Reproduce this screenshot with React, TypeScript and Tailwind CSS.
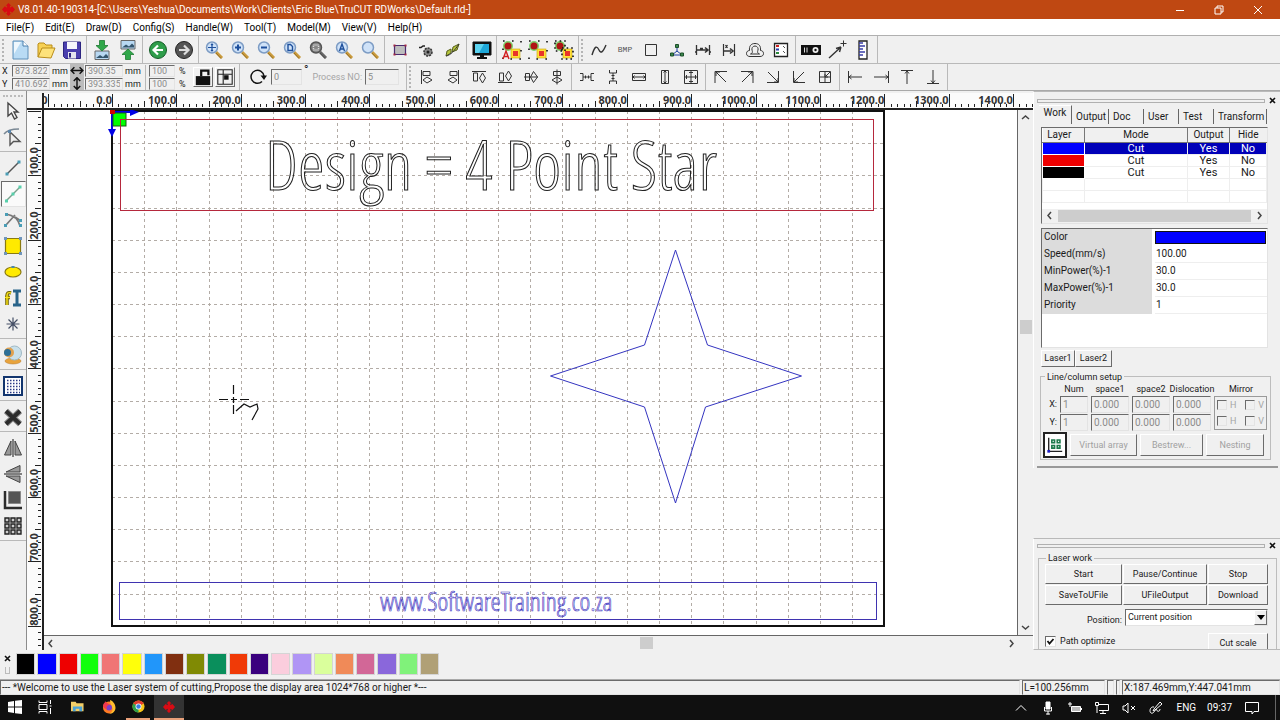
import React from 'react';

const SCALE = 0.6435;
const ORIGIN_X = 68;
const ORIGIN_Y = 1;
const BED_W = 772;
const BED_H = 515;

const raised = 'border border-t-white border-l-white border-r-[#6b6b6b] border-b-[#6b6b6b] bg-[#f0f0f0]';
const sunken = 'border border-t-[#6b6b6b] border-l-[#6b6b6b] border-r-[#e3e3e3] border-b-[#e3e3e3]';

const range = (from: number, to: number) =>
  Array.from({ length: to - from + 1 }, (_, i) => from + i);

/* ---------- icons ---------- */

const Icon: React.FC<{ children: React.ReactNode; className?: string }> = ({ children, className }) => (
  <svg viewBox="0 0 20 20" fill="none" stroke="#333" aria-hidden="true" className={className ?? 'w-5 h-5'}>
    {children}
  </svg>
);

const Magnifier: React.FC<{ children?: React.ReactNode; gray?: boolean }> = ({ children, gray }) => (
  <Icon>
    <path d="M12 12 L18 18" stroke={gray ? '#666' : '#c99a3c'} strokeWidth="3" />
    <path d="M12 13 L17 18.500" stroke={gray ? '#444' : '#8a6420'} strokeWidth="0.8" />
    <circle cx="8" cy="7.500" r="5.500" fill={gray ? '#888' : '#cfe2f8'} stroke={gray ? '#555' : '#7d9cc4'} strokeWidth="1.500" />
    <g stroke={gray ? '#ddd' : '#1d4f9c'} strokeWidth="1.400">{children}</g>
  </Icon>
);

const GroupIcon: React.FC<{ variant: 'auto' | 'group' | 'ungroup' }> = ({ variant }) => (
  <Icon>
    <circle cx="6" cy="6" r="5" fill="#7bd06a" stroke="none" />
    <circle cx="6" cy="6" r="3.500" fill="#b01414" stroke="none" />
    <rect x="9" y="9" width="9" height="9" fill="#ffe03a" stroke="#c9a600" strokeWidth="0.6" />
    <rect x="11" y="11" width="5" height="5" fill="#e8342a" stroke="none" />
    {variant === 'ungroup' ? (
      <path d="M1 1h10v10H1z M8 8h11v11H8z" stroke="#111" strokeWidth="1.600" strokeDasharray="1.600 3" />
    ) : (
      <path d="M1 1h18v18H1z" stroke="#111" strokeWidth="1.600" strokeDasharray="1.600 7.400" />
    )}
    {variant === 'auto' && <path d="M1 19 L4 11 L7 19 M2 16.500h4" stroke="#d21f1f" strokeWidth="1.400" />}
  </Icon>
);

type Tool = { label: string; icon: React.ReactNode };

const fileTools: Tool[][] = [
  [
    {
      label: 'New',
      icon: (
        <Icon>
          <path d="M3 1h10l5 5v13H3z" fill="#b9dbf4" stroke="#5f8fb8" />
          <path d="M4 2h7L4 14z" fill="#eef7fd" stroke="none" />
          <path d="M13 1v5h5" fill="#fff" stroke="#4a7fab" />
        </Icon>
      ),
    },
    {
      label: 'Open',
      icon: (
        <Icon>
          <path d="M2 17V4l1-1h5l2 2h6v3" fill="#f7d154" stroke="#b98d1b" />
          <path d="M2 17l4-9h13l-4 10z" fill="#fde27a" stroke="#b98d1b" />
        </Icon>
      ),
    },
    {
      label: 'Save',
      icon: (
        <Icon>
          <path d="M1.500 2h17v16.500h-15l-2-2z" fill="#4a3fae" stroke="#2c2480" />
          <path d="M5 2h10v7H5z" fill="#f5f5fb" stroke="none" />
          <path d="M6 12h8v6.500H6z" fill="#e4e4ee" stroke="none" />
          <path d="M8 13v4.500" stroke="#2c2480" strokeWidth="2" />
        </Icon>
      ),
    },
  ],
  [
    {
      label: 'Import',
      icon: (
        <Icon>
          <path d="M3 11h14v8.500H3z" fill="#b8d8f2" stroke="#666" />
          <path d="M4 18l4-3 3 2 3-3 2 2v2z" fill="#35566e" stroke="none" />
          <path d="M7.500 0.500h5v5h3.500L10 11 4 5.500h3.500z" fill="#2fa84a" stroke="#1d7a31" strokeWidth="0.8" />
        </Icon>
      ),
    },
    {
      label: 'Export',
      icon: (
        <Icon>
          <path d="M3 0.500h14V9H3z" fill="#b8d8f2" stroke="#666" />
          <path d="M4 7.500l4-3 3 2 3-3 2 2v2z" fill="#35566e" stroke="none" />
          <path d="M7.500 19.500h5v-5h3.500L10 9l-6 5.500h3.500z" fill="#2fa84a" stroke="#1d7a31" strokeWidth="0.8" />
        </Icon>
      ),
    },
  ],
  [
    {
      label: 'Undo',
      icon: (
        <Icon>
          <circle cx="10" cy="10" r="8.500" fill="#2f9e4b" stroke="#145c27" />
          <path d="M15 10H6M10 5.500L5.500 10l4.500 4.500" stroke="#fff" strokeWidth="2.200" />
        </Icon>
      ),
    },
    {
      label: 'Redo',
      icon: (
        <Icon>
          <circle cx="10" cy="10" r="8.500" fill="#555" stroke="#222" />
          <path d="M5 10h9M10 5.500l4.500 4.500-4.500 4.500" stroke="#ddd" strokeWidth="2.200" />
        </Icon>
      ),
    },
  ],
  [
    { label: 'Move view', icon: <Magnifier><path d="M8 3.500v8M4 7.500h8M7 5l1-1 1 1M7 10l1 1 1-1" strokeWidth="1.200" /></Magnifier> },
    { label: 'Zoom in', icon: <Magnifier><path d="M8 4.500v6M5 7.500h6" strokeWidth="2" /></Magnifier> },
    { label: 'Zoom out', icon: <Magnifier><path d="M5 7.500h6" strokeWidth="2" /></Magnifier> },
    { label: 'View page', icon: <Magnifier><path d="M6 4.500h2.500l2 2v4H6z" /></Magnifier> },
    { label: 'View selected', icon: <Magnifier gray><path d="M5.500 5h5v5h-5z" strokeDasharray="1 1" /></Magnifier> },
    { label: 'View all', icon: <Magnifier><path d="M5.500 11L8 4l2.500 7M6.500 9h3" /></Magnifier> },
    { label: 'View window', icon: <Magnifier /> },
  ],
  [
    {
      label: 'Show frame',
      icon: (
        <Icon>
          <path d="M4.500 5.500h11v9h-11z" fill="#bdbdbd" stroke="#4a2a70" strokeWidth="1.200" />
          <path d="M3.500 4.500h2v2h-2zM14.500 4.500h2v2h-2zM3.500 13.500h2v2h-2zM14.500 13.500h2v2h-2z" fill="#a32a42" stroke="none" />
        </Icon>
      ),
    },
    {
      label: 'Path settings',
      icon: (
        <Icon>
          <circle cx="12" cy="12" r="4" fill="#888" stroke="#333" strokeWidth="1.500" strokeDasharray="2 1" />
          <circle cx="12" cy="12" r="1.500" fill="#222" stroke="none" />
          <path d="M3 7.500h2l2-1.500h2" stroke="#222" strokeWidth="1.500" />
        </Icon>
      ),
    },
    {
      label: 'Curve smooth',
      icon: (
        <Icon>
          <path d="M4 16l1-5 4-2v4zM10 12l1-5 6-3-2 6z" fill="#b6c63c" stroke="#59611d" />
          <path d="M4 16c5-1 8-5 13-12" stroke="#333" />
        </Icon>
      ),
    },
  ],
  [
    {
      label: 'Preview',
      icon: (
        <Icon>
          <path d="M1 2h18v13H1z" fill="#111" stroke="#111" />
          <path d="M3 4h14v9H3z" fill="#1ea7d8" stroke="none" />
          <path d="M3 4h9l-5 9H3z" fill="#5cd3f0" stroke="none" />
          <path d="M8 15h4v2h3v2H5v-2h3z" fill="#111" stroke="none" />
        </Icon>
      ),
    },
  ],
  [
    { label: 'Auto group', icon: <GroupIcon variant="auto" /> },
    { label: 'Group', icon: <GroupIcon variant="group" /> },
    { label: 'Ungroup', icon: <GroupIcon variant="ungroup" /> },
  ],
];

const editTools: Tool[][] = [
  [
    { label: 'Smooth curve', icon: <Icon><path d="M3 15c3-10 5-9 7-5s4 2 7-5" strokeWidth="1.400" /></Icon> },
    { label: 'BMP handle', icon: <span className="font-['Liberation_Mono',monospace] text-[8px] text-[#555]">BMP</span> },
    { label: 'Cut optimize', icon: <Icon><path d="M4.500 4.500h11v11h-11z" /></Icon> },
    {
      label: 'Node edit',
      icon: (
        <Icon>
          <path d="M10 7v4l-5 4h10l-5-4" stroke="#1c3f9e" />
          <path d="M8.500 4.500h3v3h-3zM3.500 13h3v3h-3zM13.500 13h3v3h-3z" fill="#3d8a4f" stroke="#1c4f2a" />
        </Icon>
      ),
    },
    { label: 'Combine curve', icon: <Icon><path d="M3.500 5v10M16.500 5v10M2 12h2M16 12h2" strokeWidth="1.300" /><path d="M4 10h10M7 8.500h3M12 7.500l3 2.500-3 2.500" strokeWidth="1.600" /></Icon> },
    { label: 'Set gap', icon: <Icon><path d="M4.500 4v12M15.500 4v12M6.500 5l2 3M8.500 5l-2 3" strokeWidth="1.200" /><path d="M5 11h7M11 8.500l3 2.500-3 2.500" strokeWidth="1.600" /></Icon> },
    { label: 'Offset', icon: <Icon><path d="M5 16.500c-2 0-3.500-1-3.500-3s1.500-3 3-3C4 6 6 3.500 10 3.500s6 2.500 5.500 7c1.500 0 3 1 3 3s-1.500 3-3.500 3z" /><path d="M5.500 14c2.500-1 2-2.500 1.500-4S7.500 6 10 6s3.500 2.500 3 4-1 3 1.500 4z" /></Icon> },
    {
      label: 'Data check',
      icon: (
        <Icon>
          <path d="M3.500 3.500h13v13h-13z" fill="#fff" stroke="#222" strokeWidth="1.300" />
          <path d="M5 6h3" stroke="#c22" strokeWidth="2" />
          <path d="M5 9.500h3" stroke="#2a3fae" strokeWidth="2" />
          <path d="M5 13h3" stroke="#2c8a3c" strokeWidth="2" />
          <path d="M12 6l2 2M12 11l2 2" stroke="#555" />
        </Icon>
      ),
    },
  ],
  [
    {
      label: 'Device',
      icon: (
        <Icon>
          <path d="M0 5h20v10H0z" fill="#111" stroke="none" />
          <circle cx="14.500" cy="10" r="3" fill="#eee" stroke="none" />
          <circle cx="14.500" cy="10" r="1.200" fill="#111" stroke="none" />
          <path d="M3.500 7.500v5M6 7.500v5" stroke="#ddd" />
        </Icon>
      ),
    },
    { label: 'Laser point', icon: <Icon><path d="M2 18L14 7M14 7l-5 1.500M14 7l-1.500 5" strokeWidth="1.400" /><path d="M16.500 0.500v6M13.500 3.500h6" /></Icon> },
    { label: 'Measure', icon: <Icon><path d="M6 1h8v18H6z" fill="#fff" stroke="#222" strokeWidth="1.300" /><path d="M6 3h4M6 6h6M6 9h4M6 12h6M6 15h4" stroke="#3a3fa8" strokeWidth="1.300" /></Icon> },
  ],
];

const line = (label: string, d: string): Tool => ({ label, icon: <Icon><path d={d} /></Icon> });

const alignTools: Tool[][] = [
  [
    line('Align left', 'M4.500 3v14M6 4.500h7v4H6zM6 13l4-3 5 3-5 3z'),
    line('Align right', 'M15.500 3v14M7 4.500h7v4H7zM5 13l5-3 4 3-4 3z'),
    line('Align top', 'M3 4.500h14M4.500 6h4v8h-4zM13.500 6l3 5-3 5-3-5z'),
    line('Align bottom', 'M3 15.500h14M4.500 6h4v8h-4zM13.500 4l3 5-3 5-3-5z'),
    line('Align middle', 'M3 10h14M4.500 6.500h4v7h-4zM12.500 4.500l4 5.500-4 5.500-3-5.500z'),
    line('Align center', 'M10 2.500v15M6.500 4.500h7v4h-7zM10 10l5 3-5 3-5-3z'),
  ],
  [
    line('Equal horizontal space', 'M3 6.500h3v7H3M17 6.500h-3v7h3M6 10h8M8.500 8.500v3M11.500 8.500v3'),
    line('Equal vertical space', 'M6.500 3v3h7V3M6.500 17v-3h7v3M10 6v8M8.500 8.500h3M8.500 11.500h3'),
    line('Same width', 'M3.500 6.500h13v7h-13zM3.500 10h13M5.500 8.500L4 10l1.500 1.500M14.500 8.500L16 10l-1.500 1.500'),
    line('Same height', 'M6.500 3.500h7v13h-7zM10 3.500v13M8.500 5.500L10 4l1.500 1.500M8.500 14.500L10 16l1.500-1.500'),
    line('Same size', 'M3.500 3.500h13v13h-13zM10 3.500v13M3.500 10h13M8 5.500h4M8 14.500h4M5.500 8v4M14.500 8v4'),
  ],
  [
    line('To top left', 'M4 16V4.500h12M5 5l10 10M5 9V5h4'),
    line('To top right', 'M4 4.500h12V16M15 5L5 15M11 5h4v4'),
    line('To bottom right', 'M15.500 4v11.500H4M5 5l10 10M11 15h4v-4'),
    line('To bottom left', 'M4.500 4v11.500H16M15 5L5 15M5 11v4h4'),
    line('To center', 'M4.500 4.500h11v11h-11zM10 4v12M4 10h12M15 5l-5 5M10 7v3h3'),
  ],
  [
    line('To left', 'M3.500 4v12M4 10h13M6.500 8L4 10l2.500 2'),
    line('To right', 'M17.500 4v12M3 10h14M14.500 8l2.500 2-2.500 2'),
    line('To top', 'M4 3.500h12M10 4v13M8 6.500L10 4l2 2.500'),
    line('To bottom', 'M4 16.500h12M10 3v13M8 13.500l2 2.500 2-2.500'),
  ],
];

const drawTools: Tool[][] = [
  [
    { label: 'Pick', icon: <Icon><path d="M5 2v13l3.500-3 3 6 2.500-1.500-3-5.500H15z" fill="#f4f4f4" stroke="#444" strokeWidth="1.400" /></Icon> },
    { label: 'Edit node', icon: <Icon><path d="M7 5v13l3.500-3.500H17z" fill="#eee" stroke="#555" strokeWidth="1.400" /><path d="M1 7c3-4 8-5 15-5" stroke="#7a8894" strokeWidth="1.400" /><path d="M5 3h3v3H5z" fill="#5b86ac" stroke="none" /></Icon> },
  ],
  [
    { label: 'Line', icon: <Icon><path d="M4 16L16 4" stroke="#555" strokeWidth="1.500" /><path d="M2.500 14.500h3v3h-3zM14.500 2.500h3v3h-3z" fill="#4a9db5" stroke="none" /></Icon> },
    { label: 'Multi line', icon: <Icon><path d="M3 17L17 3" stroke="#7aa08c" strokeWidth="1.500" /><path d="M2 15.500h3v3H2zM8.500 8.500h3v3h-3zM15.500 1.500h3v3h-3z" fill="#58d0ac" stroke="none" /></Icon> },
    { label: 'Curve', icon: <Icon><path d="M3 4c6 1 12 4 14 12M3 15L12 5M12 7l6 4" stroke="#777" strokeWidth="1.700" /><path d="M2 3h3v3H2zM1 14h3v3H1zM16 14h3v3h-3zM16 9h3v3h-3z" fill="#4a9db5" stroke="none" /></Icon> },
    { label: 'Rectangle', icon: <Icon><path d="M2.500 2.500h15v15h-15z" fill="#ffea00" stroke="#8a7a10" strokeWidth="1.200" /><path d="M1 1h3v3H1zM16 1h3v3h-3zM1 16h3v3H1zM16 16h3v3h-3z" fill="#6f95bb" stroke="none" /></Icon> },
    { label: 'Ellipse', icon: <Icon><ellipse cx="10" cy="10" rx="8" ry="5" fill="#ffea00" stroke="#8a7a10" strokeWidth="1.200" /><path d="M8.500 4h3v2h-3z" fill="#4a86ac" stroke="none" /></Icon> },
    { label: 'Text', icon: <Icon><path d="M8 5c-3-1-4 0-4 3v9M2 9.500h5" stroke="#6b5e00" strokeWidth="3.500" /><path d="M8 5c-3-1-4 0-4 3v9M2 9.500h5" stroke="#f7e11b" strokeWidth="1.500" /><path d="M10 3h8M10 17h8M14 3v14" stroke="#29648a" strokeWidth="3" /></Icon> },
    { label: 'Point', icon: <Icon><path d="M10 3.500v13M3.500 10h13M5.500 5.500l9 9M14.500 5.500l-9 9" stroke="#444f66" strokeWidth="1.200" /></Icon> },
  ],
  [
    {
      label: 'Camera',
      icon: (
        <Icon>
          <ellipse cx="10" cy="16" rx="8" ry="3" fill="#e8a33c" stroke="#b5772a" strokeWidth="0.5" />
          <circle cx="11.500" cy="8" r="7" fill="#c9e0ea" stroke="#9fb9c6" />
          <circle cx="6" cy="7.500" r="5" fill="#e0a150" stroke="none" />
          <circle cx="4.500" cy="7.500" r="3.500" fill="#2d6f97" stroke="none" />
        </Icon>
      ),
    },
  ],
  [
    {
      label: 'Grid settings',
      icon: (
        <Icon>
          <path d="M1 1h18v18H1z" fill="#fff" stroke="#12356e" strokeWidth="2" />
          <path d="M4 4.500h13M4 7.500h13M4 10.500h13M4 13.500h13M4 16.500h13" stroke="#2a3a86" strokeWidth="1.500" strokeDasharray="1.500 1.500" />
        </Icon>
      ),
    },
  ],
  [{ label: 'Delete', icon: <Icon><path d="M3 4l14 13M17 4L3 17" stroke="#8a8a8a" strokeWidth="6" /><path d="M3 4l14 13M17 4L3 17" stroke="#2c2c2c" strokeWidth="4" /></Icon> }],
  [
    { label: 'Mirror horizontal', icon: <Icon><path d="M8 3v14H1.500zM12 3v14h6.500z" fill="#999" stroke="#444" /><path d="M10 1v18" stroke="#111" /></Icon> },
    { label: 'Mirror vertical', icon: <Icon><path d="M17 8H3l14-6.500zM17 12H3l14 6.500z" fill="#999" stroke="#444" /><path d="M1 10h18" stroke="#111" /></Icon> },
    { label: 'Dock', icon: <Icon><path d="M5.500 1.500h12v12h-12z" fill="#555" stroke="#888" /><path d="M2 1v17h17" stroke="#2c2c2c" strokeWidth="2.500" /></Icon> },
    { label: 'Array', icon: <Icon><path d="M2 2h4v4H2zM8 2h4v4H8zM14 2h4v4h-4zM2 8h4v4H2zM8 8h4v4H8zM14 8h4v4h-4zM2 14h4v4H2zM8 14h4v4H8zM14 14h4v4h-4z" fill="#ccc" stroke="#222" strokeWidth="1.400" /></Icon> },
  ],
];

/* ---------- toolbars ---------- */

const Grip = () => <div className="w-[5px] h-[22px] shrink-0 border-l-2 border-dotted border-[#b5b5b5]" />;

const ToolGroups: React.FC<{ groups: Tool[][] }> = ({ groups }) => (
  <>
    {groups.map((group, i) => (
      <div key={i} className="flex items-center h-full border-r border-[#b9b9b9] pr-px mr-[2px] shrink-0">
        {group.map((tool) => (
          <button key={tool.label} aria-label={tool.label} className="w-[26px] h-[26px] flex items-center justify-center">
            {tool.icon}
          </button>
        ))}
      </div>
    ))}
  </>
);

const Field: React.FC<{ label: string; value: string; className: string }> = ({ label, value, className }) => (
  <input
    aria-label={label}
    defaultValue={value}
    className={`${sunken} min-w-0 bg-[#f0f0f0] px-[2px] text-[#8b8b8b] ${className}`}
  />
);

const TransformBar = () => (
  <div className="flex items-center h-full text-[9px] leading-[12px] shrink-0">
    <div className="grid grid-cols-[8px_38px_16px] gap-x-[2px] gap-y-px pl-[2px] items-center">
      <span>X</span>
      <Field label="X" value="873.822" className="h-3" />
      <span>mm</span>
      <span>Y</span>
      <Field label="Y" value="410.692" className="h-3" />
      <span>mm</span>
    </div>
    <div className="w-[14px] ml-[2px] bg-[#bcbcbc] flex flex-col">
      <Icon className="w-[14px] h-[13px]"><path d="M1 10h18M6 5l-5 5 5 5M14 5l5 5-5 5" stroke="#111" strokeWidth="2.200" /></Icon>
      <Icon className="w-[14px] h-[13px]"><path d="M10 1v18M5 6l5-5 5 5M5 14l5 5 5-5" stroke="#111" strokeWidth="2.200" /></Icon>
    </div>
    <div className="grid grid-cols-[38px_16px] gap-x-[2px] gap-y-px ml-px items-center">
      <Field label="Width" value="390.35" className="h-3" />
      <span>mm</span>
      <Field label="Height" value="393.335" className="h-3" />
      <span>mm</span>
    </div>
    <div className="grid grid-cols-[26px_12px] gap-x-1 gap-y-px ml-1 pl-[3px] border-l border-[#b9b9b9] items-center">
      <Field label="Width percent" value="100" className="h-3" />
      <span>%</span>
      <Field label="Height percent" value="100" className="h-3" />
      <span>%</span>
    </div>
    <div className="flex gap-[2px] ml-[2px] pr-1 h-full items-center border-r border-[#b9b9b9]">
      <button aria-label="Lock ratio" className={`${raised} w-5 h-5`}>
        <Icon className="w-[18px] h-[18px]"><path d="M2 9h16v10H2z" fill="#111" stroke="none" /><path d="M8 9V3h8v5" stroke="#111" strokeWidth="2.500" /></Icon>
      </button>
      <button aria-label="Anchor" className={`${raised} w-5 h-5`}>
        <Icon className="w-[18px] h-[18px]"><path d="M2 2h16v16H2zM2 7h16M8 2v16" stroke="#222" strokeWidth="1.200" /><path d="M9 8h5v5H9z" fill="#111" stroke="none" /></Icon>
      </button>
    </div>
    <Icon className="w-5 h-5 ml-2"><path d="M14 14.500A6.500 6.500 0 1 1 16 9" stroke="#111" strokeWidth="1.500" /><path d="M12.500 8.500h6.500L16 13z" fill="#111" stroke="none" /></Icon>
    <Field label="Angle" value="0" className="w-[31px] h-4 ml-[3px]" />
    <span className="ml-[2px] self-start text-[12px]">°</span>
    <label className="flex items-center gap-[3px] ml-1 text-[#a5a5a5]">
      <span>Process NO:</span>
      <Field label="Process NO" value="5" className="w-[34px] h-4" />
    </label>
    <div className="w-2 h-full mr-[2px] border-r border-[#b9b9b9]" />
  </div>
);

const DrawToolbar = () => (
  <div className="w-[27px] shrink-0 border-r border-[#8c8c8c] flex flex-col items-center pt-1">
    <div className="w-5 h-[3px] border-t-2 border-dotted border-[#bbb]" />
    {drawTools.map((group, i) => (
      <div key={i} className="flex flex-col items-center w-full border-b border-[#b9b9b9] pb-px mb-[3px]">
        {group.map((tool) => (
          <button
            key={tool.label}
            aria-label={tool.label}
            className={`w-[25px] h-[26px] flex items-center justify-center ${
              tool.label === 'Multi line' ? `${sunken} bg-[#fafafa]` : ''
            }`}
          >
            {tool.icon}
          </button>
        ))}
      </div>
    ))}
  </div>
);

/* ---------- workspace ---------- */

const tickSize = (i: number) => {
  if (i % 10 === 0) return 13;
  return i % 5 === 0 ? 6 : 3;
};

const TopRuler = () => (
  <svg className="flex-1 min-w-0 h-full bg-[#fbfbfb] overflow-hidden" aria-label="Horizontal ruler">
    {range(-10, 145).map((i) => {
      const x = Math.round(ORIGIN_X + i * 10 * SCALE) + 0.5;
      return <line key={i} x1={x} x2={x} y1={14 - tickSize(i)} y2={14} stroke="#222" />;
    })}
    {range(-1, 14).map((n) => (
      <text key={n} x={ORIGIN_X + n * 100 * SCALE} y="11" textAnchor="end" className="text-[11px] font-bold fill-[#333] font-['Noto_Sans',sans-serif]">
        {(n * 100).toFixed(1)}
      </text>
    ))}
  </svg>
);

const LeftRuler = () => (
  <svg className="w-[17px] shrink-0 bg-[#fbfbfb] border-r-2 border-[#222] overflow-hidden" aria-label="Vertical ruler">
    {range(0, 84).map((i) => {
      const y = Math.round(ORIGIN_Y + i * 10 * SCALE) + 0.5;
      return <line key={i} x1={14 - tickSize(i)} x2={14} y1={y} y2={y} stroke="#222" />;
    })}
    {range(1, 8).map((n) => (
      <text
        key={n}
        transform={`translate(11 ${ORIGIN_Y + n * 100 * SCALE}) rotate(-90)`}
        className="text-[11px] font-bold fill-[#333] font-['Noto_Sans',sans-serif]"
      >
        {(n * 100).toFixed(1)}
      </text>
    ))}
  </svg>
);

const DesignCanvas = () => (
  <svg className="flex-1 min-w-0 bg-white overflow-hidden" aria-label="Design area">
    <g transform={`translate(${ORIGIN_X} ${ORIGIN_Y})`} fill="none">
      <g stroke="#b3aca6" strokeDasharray="3 3">
        {range(1, 23).map((i) => {
          const x = Math.round(i * 50 * SCALE) + 0.5;
          return <line key={i} x1={x} x2={x} y1="0" y2={BED_H} />;
        })}
        {range(1, 15).map((i) => {
          const y = Math.round(i * 50 * SCALE) + 0.5;
          return <line key={i} x1="0" x2={BED_W} y1={y} y2={y} />;
        })}
      </g>
      <rect width={BED_W} height={BED_H} stroke="#111" strokeWidth="2" />
      <path d="M0 1h24M0 0v24" stroke="#0000e6" strokeWidth="2" />
      <path d="M18 -2l9 3-9 4zM-4 18l4 8 4-8z" fill="#0000e6" />
      <rect x="1" y="2" width="13" height="13" fill="#00ff00" stroke="#145c14" />
      <rect x="-2" y="-2" width="5" height="5" fill="#d00000" />

      <rect x="8.500" y="8.500" width="753" height="91" stroke="#b5283c" />
      <text x="153" y="79" stroke="#222" strokeWidth="1" className="text-[68px] font-light font-['Open_Sans_Condensed_Light','Open_Sans_Condensed','Liberation_Sans_Narrow',sans-serif]">
        Design = 4 Point Star
      </text>

      <path d="M563.500 139l32 95 94 31-96 31-30 96-31-96-94-31 94-31z" stroke="#3434c0" />

      <rect x="7.500" y="471.500" width="757" height="37" stroke="#3f33b0" />
      <text x="268" y="500" stroke="#3a2fc0" strokeWidth="0.600" className="text-[26px] font-light font-['Open_Sans_Condensed_Light','Open_Sans_Condensed','Liberation_Sans_Narrow',sans-serif]">
        www.SoftwareTraining.co.za
      </text>

      <g stroke="#111" strokeWidth="1.200">
        <path d="M107 288.500h9M119 288.500h6M128 288.500h9M121.500 274v9M121.500 286v6M121.500 294v9" />
        <path d="M124 300l8-7 6 3 7-3 1 5-6 11" />
      </g>
    </g>
  </svg>
);

const Chevron: React.FC<{ d: string }> = ({ d }) => (
  <svg viewBox="0 0 9 9" className="w-[9px] h-[9px] shrink-0" fill="none" stroke="#444" strokeWidth="1.500" aria-hidden="true">
    <path d={d} />
  </svg>
);

const chevrons = {
  left: 'M6 1L3 4.500 6 8',
  right: 'M3 1l3 3.500L3 8',
  up: 'M1 6l3.500-3L8 6',
  down: 'M1 3l3.500 3L8 3',
};

const Workspace = () => (
  <main className="flex-1 min-w-0 flex flex-col">
    <div className="h-[19px] pt-[2px] shrink-0 flex border-b-2 border-[#222]">
      <div className="w-[17px] shrink-0 bg-[#f6f6f6] border-r-2 border-[#222]" />
      <TopRuler />
    </div>
    <div className="flex-1 min-h-0 flex">
      <LeftRuler />
      <div className="flex-1 min-w-0 flex flex-col">
        <div className="flex-1 min-h-0 flex">
          <DesignCanvas />
          <div className="w-4 shrink-0 border-l border-[#666] flex flex-col items-center py-[3px]">
            <Chevron d={chevrons.up} />
            <div className="flex-[197]" />
            <div className="w-3 h-[14px] bg-[#cdcdcd]" />
            <div className="flex-[288]" />
            <Chevron d={chevrons.down} />
          </div>
        </div>
        <div className="h-[15px] shrink-0 border-t border-[#666] flex items-center pl-[2px] pr-[17px]">
          <Chevron d={chevrons.left} />
          <div className="flex-[585]" />
          <div className="w-[13px] h-3 bg-[#cdcdcd]" />
          <div className="flex-[354]" />
          <Chevron d={chevrons.right} />
        </div>
      </div>
    </div>
  </main>
);

/* ---------- right panels ---------- */

const PanelCaption: React.FC<{ label: string }> = ({ label }) => (
  <div className="flex items-center gap-[3px] h-[9px] pr-[3px]">
    <div className="flex-1 h-1 border border-[#b0b0b0]" />
    <button aria-label={`Close ${label}`} className="w-[9px] h-[9px]">
      <svg viewBox="0 0 9 9" stroke="#111" strokeWidth="1.600" aria-hidden="true"><path d="M2 2l5 5M7 2L2 7" /></svg>
    </button>
  </div>
);

const layers = [
  { color: 'bg-[#0000ff]', selected: true },
  { color: 'bg-[#ee0000]', selected: false },
  { color: 'bg-black', selected: false },
];

const panelTabs = [
  { name: 'Output', width: 'w-[37px]' },
  { name: 'Doc', width: 'w-[35px]' },
  { name: 'User', width: 'w-[35px]' },
  { name: 'Test', width: 'w-[35px]' },
  { name: 'Transform', width: 'w-[53px]' },
];

const params = [
  ['Speed(mm/s)', '100.00'],
  ['MinPower(%)-1', '30.0'],
  ['MaxPower(%)-1', '30.0'],
  ['Priority', '1'],
];

const LayerTable = () => (
  <div className={`${sunken} bg-white`}>
    <table className="w-full table-fixed border-collapse text-[11px] leading-[11px] text-center">
      <colgroup>
        <col className="w-[42px]" />
        <col />
        <col className="w-[42px]" />
        <col className="w-[37px]" />
      </colgroup>
      <thead>
        <tr className="h-[14px] bg-[#f0f0f0] text-[10px]">
          {['Layer', 'Mode', 'Output', 'Hide'].map((h) => (
            <th key={h} className="font-normal border-r border-b border-[#777] first:pr-2 last:border-r-0">{h}</th>
          ))}
        </tr>
      </thead>
      <tbody>
        {layers.map(({ color, selected }) => (
          <tr key={color} className={`h-3 ${selected ? 'bg-[#0000b8] text-white' : ''}`}>
            <td className={`${color} border border-white`} />
            <td className="border border-[#eee]">Cut</td>
            <td className="border border-[#eee]">Yes</td>
            <td className="border border-[#eee]">No</td>
          </tr>
        ))}
        {range(0, 1).map((i) => (
          <tr key={i} className="h-3">
            {range(0, 3).map((c) => <td key={c} className="border border-[#eee]" />)}
          </tr>
        ))}
      </tbody>
    </table>
    <div className="h-[6px]" />
    <div className="h-[14px] bg-[#f0f0f0] flex items-center gap-1 px-[3px]">
      <Chevron d={chevrons.left} />
      <div className="flex-1 h-3 bg-[#cdcdcd]" />
      <Chevron d={chevrons.right} />
    </div>
  </div>
);

const MirrorRow: React.FC<{ axis: string }> = ({ axis }) => (
  <div className="flex items-center justify-between h-4 px-[2px]">
    {['H', 'V'].map((side) => (
      <label key={side} className="flex items-center gap-[3px]">
        <input type="checkbox" disabled aria-label={`Mirror ${axis} ${side}`} className={`${sunken} appearance-none w-[10px] h-[10px]`} />
        {side}
      </label>
    ))}
  </div>
);

const ArraySetup = () => (
  <fieldset className="border border-[#bdbdbd] mx-[3px] mt-1 px-[2px] pb-px text-[9px] leading-[12px]">
    <legend className="ml-[2px] px-[2px]">Line/column setup</legend>
    <div className="grid grid-cols-[14px_28px_38px_38px_38px_1fr] gap-x-[3px] gap-y-px items-center text-center">
      <span />
      <span>Num</span>
      <span>space1</span>
      <span>space2</span>
      <span className="flex justify-center">Dislocation</span>
      <span>Mirror</span>
      {['X', 'Y'].map((axis, i) => (
        <React.Fragment key={axis}>
          <span className="text-right">{axis}:</span>
          <Field label={`${axis} num`} value="1" className="h-[17px] text-[10px]" />
          <Field label={`${axis} space 1`} value="0.000" className="h-[17px] text-[10px]" />
          <Field label={`${axis} space 2`} value="0.000" className="h-[17px] text-[10px]" />
          <Field label={`${axis} dislocation`} value="0.000" className="h-[17px] text-[10px]" />
          {i === 0 && (
            <div className="row-span-2 border border-[#9a9a9a] text-[#a5a5a5] mr-px">
              <MirrorRow axis="X" />
              <MirrorRow axis="Y" />
            </div>
          )}
        </React.Fragment>
      ))}
    </div>
    <div className="flex items-center gap-[3px] mt-px text-[#a0a0a0]">
      <button aria-label="Array mode" className="w-6 h-[26px] border-2 border-[#222] bg-white flex items-center justify-center">
        <Icon className="w-[18px] h-[18px]">
          <path d="M3 2v15h15" stroke="#222" strokeWidth="1.500" />
          <path d="M6.500 4.500h3v3h-3zM12.500 4.500h3v3h-3zM6.500 10.500h3v3h-3zM12.500 10.500h3v3h-3z" stroke="#1d7a4c" strokeWidth="1.800" />
          <path d="M1.500 15.500h3v3h-3z" fill="#1a1ac0" stroke="none" />
        </Icon>
      </button>
      <button disabled className={`${raised} w-[67px] h-[22px]`}>Virtual array</button>
      <button disabled className={`${raised} w-[63px] h-[22px]`}>Bestrew...</button>
      <button disabled className={`${raised} w-[58px] h-[22px]`}>Nesting</button>
    </div>
  </fieldset>
);

const WorkPanel = () => (
  <section className="pt-1 border-t border-l border-[#b9b9b9] border-l-white pl-[3px]">
    <PanelCaption label="work panel" />
    <div className="flex items-end ml-[2px] text-[10px] leading-[14px]" role="tablist">
      <button role="tab" aria-selected="true" className="w-[33px] h-[19px] pb-1 border-t border-white border-r border-r-[#666]">Work</button>
      {panelTabs.map(({ name, width }) => (
        <button key={name} role="tab" aria-selected="false" className={`${width} h-[15px] pl-1 text-left border-r border-[#666]`}>
          {name}
        </button>
      ))}
    </div>
    <div className="ml-1 mr-[12px] mt-[3px]">
      <LayerTable />
      <div className={`${sunken} bg-white h-[120px] mt-1 text-[10px] leading-[16px]`}>
        <div className="grid grid-cols-[110px_1fr] gap-x-[3px]">
          <span className="bg-[#dcdcdc] h-[17px] pl-[2px]">Color</span>
          <button aria-label="Layer color" className="bg-[#0000ff] border border-[#111] h-[13px] mt-[2px] mr-px" />
          {params.map(([name, value]) => (
            <React.Fragment key={name}>
              <label htmlFor={name} className="bg-[#dcdcdc] h-[17px] pl-[2px]">{name}</label>
              <input id={name} defaultValue={value} className="h-[17px] min-w-0 pl-px border-b border-[#eee]" />
            </React.Fragment>
          ))}
        </div>
      </div>
      <div className="flex mt-[2px] text-[9px] leading-[14px]">
        <button className={`${raised} w-[34px] h-[17px]`}>Laser1</button>
        <button className={`${raised} w-[37px] h-[17px]`}>Laser2</button>
      </div>
    </div>
    <div className="mr-[6px]">
      <ArraySetup />
    </div>
    <div className="mt-[6px] mr-[2px] border-t-2 border-[#999]" />
  </section>
);

const LaserPanel = () => (
  <section className="h-[112px] overflow-hidden pt-[2px] border-y border-l border-[#b9b9b9] border-l-white pl-[3px] text-[9px] leading-[12px]">
    <PanelCaption label="laser panel" />
    <fieldset className="border border-[#bdbdbd] mt-[2px] mr-[3px] ml-px pl-[6px] pr-2 h-[110px]">
      <legend className="ml-px px-[2px]">Laser work</legend>
      <div className="grid grid-cols-[77fr_84fr_60fr] gap-px">
        {['Start', 'Pause/Continue', 'Stop', 'SaveToUFile', 'UFileOutput', 'Download'].map((name) => (
          <button key={name} className={`${raised} h-5`}>{name}</button>
        ))}
      </div>
      <div className="flex items-center justify-end gap-[3px] mt-[3px]">
        <label htmlFor="position" className="pt-[6px]">Position:</label>
        <span className={`${sunken} relative flex w-[143px] h-[17px] bg-white`}>
          <select id="position" className="appearance-none w-full pl-[2px] bg-transparent">
            <option>Current position</option>
          </select>
          <span className={`${raised} absolute right-0 inset-y-0 w-[13px] flex items-center justify-center pointer-events-none`}>
            <svg viewBox="0 0 8 5" className="w-2 h-[5px]" aria-hidden="true"><path d="M0 0h8L4 5z" /></svg>
          </span>
        </span>
      </div>
      <div className="flex items-start justify-between mt-[7px]">
        <label className="flex items-center gap-1 pt-[2px]">
          <span className="relative flex">
            <input type="checkbox" defaultChecked className={`${sunken} appearance-none peer w-[11px] h-[11px] bg-white`} />
            <svg viewBox="0 0 11 11" className="absolute inset-0 hidden peer-checked:block pointer-events-none" fill="none" stroke="#111" strokeWidth="1.800" aria-hidden="true">
              <path d="M2.500 5l2 2.500L8.500 3" />
            </svg>
          </span>
          Path optimize
        </label>
        <button className={`${raised} w-[60px] h-5`}>Cut scale</button>
      </div>
    </fieldset>
  </section>
);

/* ---------- bottom bars ---------- */

const palette = [
  'bg-[#000000]', 'bg-[#0000ff]', 'bg-[#ee0000]', 'bg-[#11ff0b]', 'bg-[#f07575]',
  'bg-[#ffff0a]', 'bg-[#2196fa]', 'bg-[#802f10]', 'bg-[#808a04]', 'bg-[#0a8f5c]',
  'bg-[#f03a07]', 'bg-[#3a007e]', 'bg-[#fbcddd]', 'bg-[#b095f5]', 'bg-[#daff9c]',
  'bg-[#f08a58]', 'bg-[#d26797]', 'bg-[#8a67db]', 'bg-[#80f27a]', 'bg-[#b0a076]',
];

const PaletteBar = () => (
  <div className="h-[30px] shrink-0 flex items-center pb-px border-b border-[#a9a9a9]">
    <div className="w-[15px] flex flex-col items-center gap-1">
      <button aria-label="Close palette" className="w-[9px] h-[9px]">
        <svg viewBox="0 0 9 9" stroke="#111" strokeWidth="1.600" aria-hidden="true"><path d="M2 2l5 5M7 2L2 7" /></svg>
      </button>
      <div className="w-[5px] h-[7px] border-x border-b border-[#bbb]" />
    </div>
    <div className="grid grid-cols-20 w-[425px]">
      {palette.map((color) => (
        <button key={color} aria-label={color.slice(4, -1)} className={`h-[22px] border border-[#d5d5d5] mx-px ${color}`} />
      ))}
    </div>
  </div>
);

const StatusBar = () => (
  <footer className="h-[15px] shrink-0 flex gap-[2px] text-[10px] leading-[14px]">
    <div className={`${sunken} flex-1 pl-px whitespace-nowrap`}>
      --- *Welcome to use the Laser system of cutting,Propose the display area 1024*768 or higher *---
    </div>
    <div className={`${sunken} w-[83px] pl-px`}>L=100.256mm</div>
    <div className={`${sunken} w-[7px]`} />
    <div className={`${sunken} w-[4px]`} />
    <div className={`${sunken} w-[158px] pl-px`}>X:187.469mm,Y:447.041mm</div>
  </footer>
);

const RedDiamond: React.FC<{ className: string }> = ({ className }) => (
  <svg viewBox="0 0 14 14" className={className} fill="#d80b14" aria-hidden="true">
    <path d="M7 0l3 3H8.500v2L11 3.500 14 7l-3 3.500L8.500 9v2H10l-3 3-3-3h1.500V9L3 10.500 0 7l3-3.500L5.500 5V3H4z" />
  </svg>
);

const taskButton = 'h-full flex items-center justify-center border-b-2';

const Taskbar = () => (
  <div className="h-[25px] shrink-0 bg-[#101010] text-white flex items-stretch text-[10px]">
    <button aria-label="Start menu" className={`${taskButton} w-[30px] border-transparent`}>
      <svg viewBox="0 0 14 14" className="w-[14px] h-[14px]" fill="#fff" aria-hidden="true">
        <path d="M0 2l6-1v5.500H0zM7 0.800L14 0v6.500H7zM0 7.500h6V13l-6-1zM7 7.500h7V14l-7-0.800z" />
      </svg>
    </button>
    <button aria-label="Task view" className={`${taskButton} w-[29px] border-transparent`}>
      <svg viewBox="0 0 14 14" className="w-[14px] h-[14px]" fill="none" stroke="#fff" aria-hidden="true">
        <path d="M1 0.500v2h8v-2M1 13.500v-2h8v2M1 4.500h8v5H1zM12.500 0v4M12.500 8v6M11.500 6h2" />
      </svg>
    </button>
    <button aria-label="File Explorer" className={`${taskButton} w-9 border-transparent`}>
      <svg viewBox="0 0 14 14" className="w-[13px] h-[13px]" aria-hidden="true">
        <path d="M0 2h5l1 1.500h7.500V12H0z" fill="#f3cf68" />
        <path d="M2 7h10v5H9V9.500H5V12H2z" fill="#4aa3d8" />
      </svg>
    </button>
    <button aria-label="Firefox" className={`${taskButton} w-[27px] border-transparent`}>
      <svg viewBox="0 0 14 14" className="w-[14px] h-[14px]" aria-hidden="true">
        <circle cx="7" cy="7.500" r="6" fill="#ff7b22" />
        <path d="M8 0c3 1 5.500 4 5.500 8 0 3-3 6-6.500 6 4-2 4-5 3-7s-2-4-2-7z" fill="#ffbe2e" />
        <circle cx="7" cy="7.500" r="3" fill="#7a3fc9" />
        <path d="M1 5c1-2 2-2 2-4 1 2 3 2 5 4-3 0-4 2-3 4-3 0-4-2-4-4z" fill="#f0384d" />
      </svg>
    </button>
    <button aria-label="Chrome" className={`${taskButton} w-6 mx-1 border-[#e8a07a]`}>
      <svg viewBox="0 0 14 14" className="w-[13px] h-[13px]" aria-hidden="true">
        <circle cx="7" cy="7" r="6.500" fill="#f5c518" />
        <path d="M7 7L1.400 3.700A6.500 6.500 0 0 1 12.600 3.700z" fill="#e23b2e" />
        <path d="M7 7L1.400 3.700A6.500 6.500 0 0 0 7 13.500z" fill="#2f9e4b" />
        <circle cx="7" cy="7" r="3.200" fill="#fff" />
        <circle cx="7" cy="7" r="2.400" fill="#3b7de0" />
      </svg>
    </button>
    <button aria-label="RDWorks" className={`${taskButton} w-[30px] bg-[#333] border-[#e8a07a]`}>
      <RedDiamond className="w-3 h-3" />
    </button>
    <div className="flex-1" />
    <div className="flex items-center gap-[13px] pr-1">
      <svg viewBox="0 0 14 14" className="w-[14px] h-[14px]" fill="none" stroke="#fff" aria-hidden="true"><path d="M2 9.500l5-5 5 5" /></svg>
      <svg viewBox="0 0 14 14" className="w-[14px] h-[14px]" fill="none" stroke="#fff" aria-hidden="true"><path d="M5 1h4v7H5z" fill="#fff" /><path d="M3.500 6v4h7V6M7 10v3.500M5 13h4" /></svg>
      <svg viewBox="0 0 14 14" className="w-[14px] h-[14px]" fill="none" stroke="#fff" aria-hidden="true"><path d="M3.500 5.500h9v5h-9z" fill="#bbb" /><path d="M0 3h4M2 1v5M13.500 7v2" /></svg>
      <svg viewBox="0 0 14 14" className="w-[14px] h-[14px]" fill="none" stroke="#fff" aria-hidden="true"><path d="M4 3.500h9.500v6H4M8 9.500V12M5 12.500h6M0.500 1.500h3v3h-3zM2 5v7" /></svg>
      <svg viewBox="0 0 14 14" className="w-[14px] h-[14px]" fill="none" stroke="#fff" aria-hidden="true"><path d="M1 5h2l3-3v10L3 9H1zM9 5l4 4M13 5L9 9" /></svg>
      <svg viewBox="0 0 14 14" className="w-[14px] h-[14px]" fill="none" stroke="#fff" aria-hidden="true"><path d="M5 8l6-7 2 2-7 6-2 1zM5 6c-4-1-5 5-3 6s4-2 5-4c1 3 4 3 4 0" /></svg>
      <div className="flex items-center gap-[11px]">
        <span>ENG</span>
        <span>09:37</span>
      </div>
      <svg viewBox="0 0 14 14" className="w-[14px] h-[14px]" fill="none" stroke="#fff" aria-hidden="true"><path d="M0.500 1.500h13v9H9l-2 2.500v-2.500H0.500z" /></svg>
      <div className="w-px h-[25px] ml-[3px] bg-[#666]" />
    </div>
  </div>
);

/* ---------- window ---------- */

const menus = ['File(F)', 'Edit(E)', 'Draw(D)', 'Config(S)', 'Handle(W)', 'Tool(T)', 'Model(M)', 'View(V)', 'Help(H)'];

const App: React.FC = () => (
  <div className="h-screen flex flex-col overflow-hidden bg-[#f0f0f0] text-[#1a1a1a] font-[Roboto,sans-serif]">
    <header className="h-[19px] shrink-0 bg-[#bf4812] text-white flex items-center pl-[2px] pr-[3px] text-[10px]">
      <RedDiamond className="w-[13px] h-[13px]" />
      <h1 className="flex-1 pl-[3px] whitespace-nowrap">
        V8.01.40-190314-[C:\Users\Yeshua\Documents\Work\Clients\Eric Blue\TruCUT RDWorks\Default.rld-]
      </h1>
      {[
        ['Minimize', 'M1 5.500h8'],
        ['Restore', 'M1 3h6v6H1zM3 3V1h6v6H7'],
        ['Close', 'M1 1l8 8M9 1L1 9'],
      ].map(([label, d]) => (
        <button key={label} aria-label={label} className="w-[39px] h-full flex items-center justify-center">
          <svg viewBox="0 0 10 10" className="w-[10px] h-[10px]" fill="none" stroke="#fff" aria-hidden="true"><path d={d} /></svg>
        </button>
      ))}
    </header>

    <nav className="h-[17px] shrink-0 bg-white border-b border-[#b0b0b0] flex items-center gap-[11px] pl-[6px] text-[10px] text-black">
      {menus.map((menu) => (
        <button key={menu}>{menu}</button>
      ))}
    </nav>

    <div className="h-[28px] shrink-0 flex items-center pl-[2px] border-b border-[#b9b9b9]">
      <Grip />
      <ToolGroups groups={fileTools} />
      <Grip />
      <ToolGroups groups={editTools} />
    </div>

    <div className="h-[27px] shrink-0 flex items-center border-b border-[#a9a9a9]">
      <TransformBar />
      <Grip />
      <ToolGroups groups={alignTools} />
    </div>

    <div className="flex-1 min-h-0 flex">
      <DrawToolbar />
      <Workspace />
      <aside className="w-[247px] shrink-0 flex flex-col justify-between overflow-hidden">
        <WorkPanel />
        <LaserPanel />
      </aside>
    </div>

    <PaletteBar />
    <StatusBar />
    <Taskbar />
  </div>
);

export default App;
